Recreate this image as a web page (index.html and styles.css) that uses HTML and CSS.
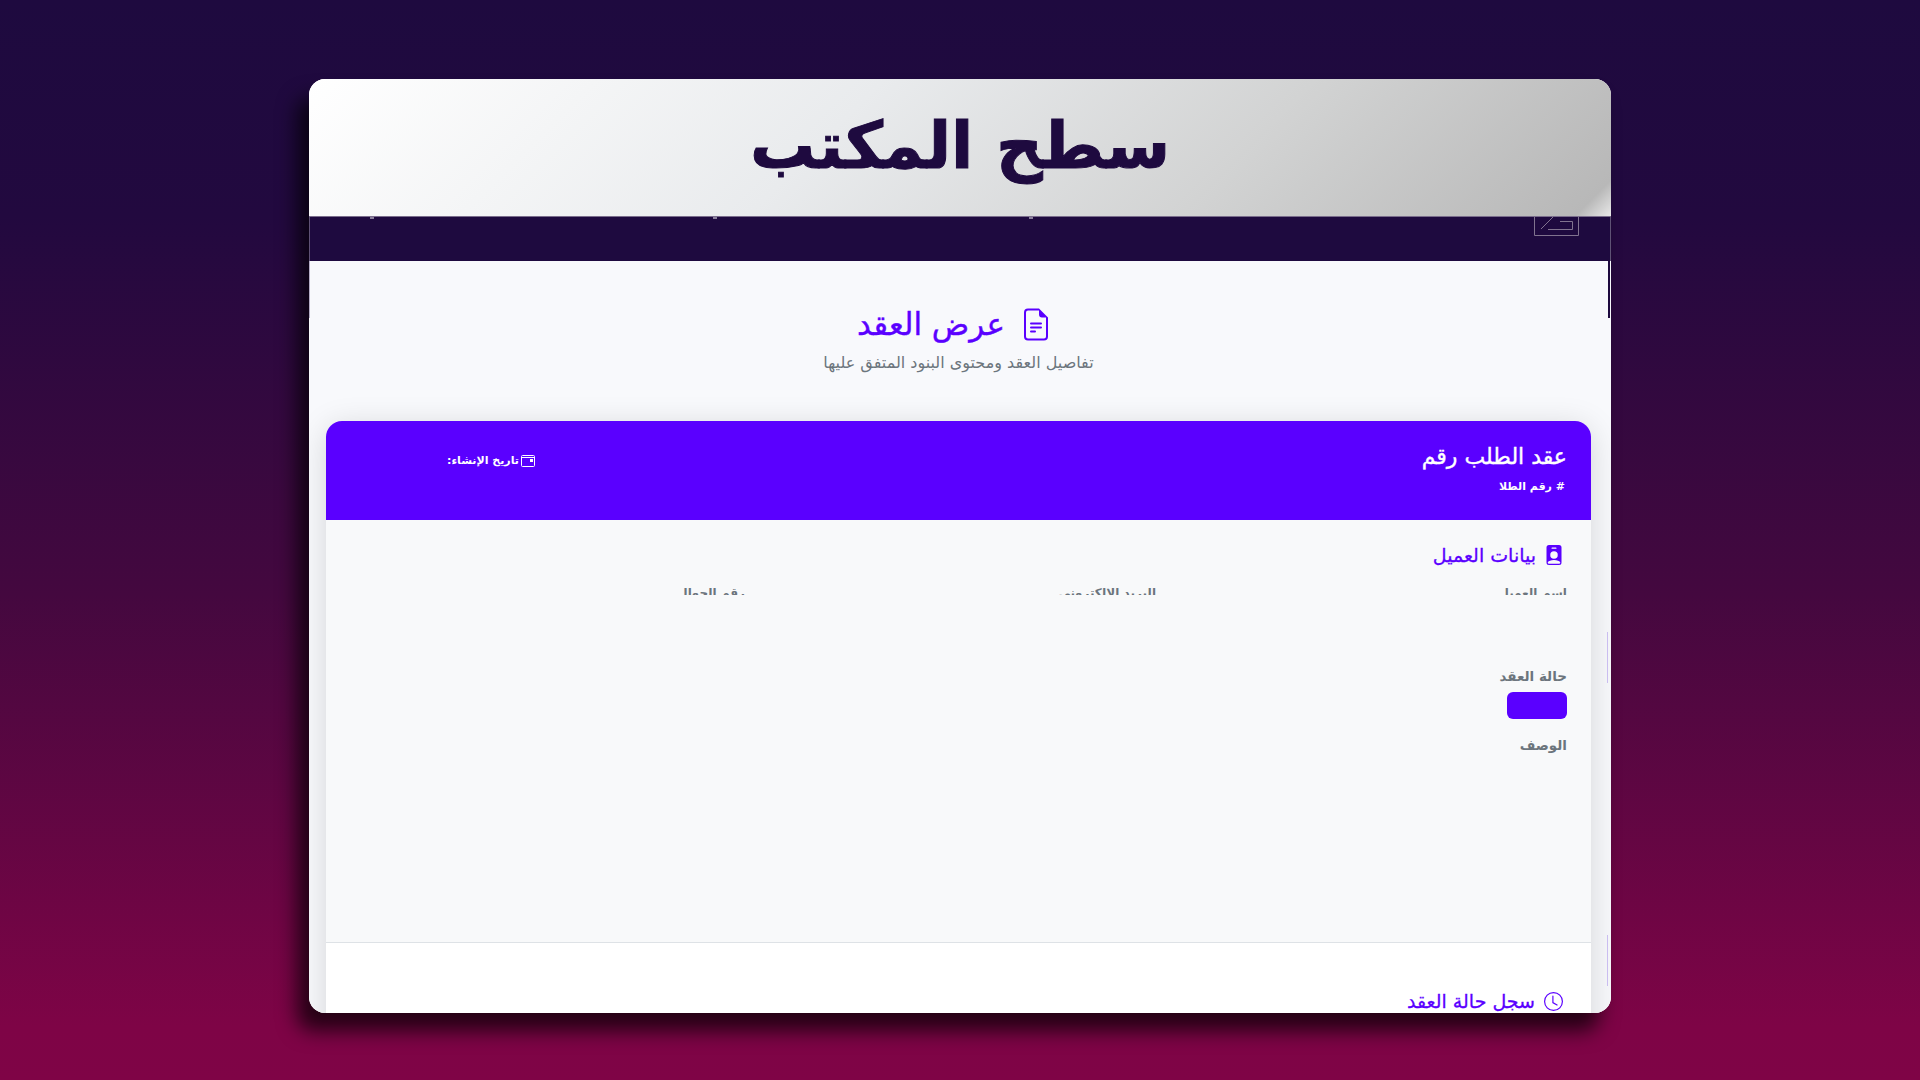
FILE: index.html
```html
<!DOCTYPE html>
<html lang="ar" dir="rtl">
<head>
<meta charset="utf-8">
<title>سطح المكتب</title>
<link rel="stylesheet" href="styles.css">
</head>
<body>
<div class="window">
  <header class="win-head"><h1>سطح المكتب</h1></header>
  <nav class="navbar">
    <svg class="nav-toggle" viewBox="0 0 45 19" width="45" height="19" aria-hidden="true">
      <path d="M.5 0V18.5H44.5V0" fill="none" stroke="#80738f"/>
      <path d="M7 12L19 0M14 12.5H38.5V4.5H26" fill="none" stroke="#80738f"/>
    </svg>
    <i class="tick tick-c"></i><i class="tick tick-b"></i><i class="tick tick-a"></i>
  </nav>
  <main class="content">
    <span class="edge edge-left"></span>
    <span class="edge edge-right"></span>
    <span class="scroll scroll-a"></span>
    <span class="scroll scroll-b"></span>
    <div class="page-head">
      <h2>
        <svg viewBox="0 0 16 16" width="32" height="33" fill="currentColor" aria-hidden="true"><path d="M5.5 7a.5.5 0 0 0 0 1h5a.5.5 0 0 0 0-1h-5zM5 9.5a.5.5 0 0 1 .5-.5h5a.5.5 0 0 1 0 1h-5a.5.5 0 0 1-.5-.5zm0 2a.5.5 0 0 1 .5-.5h2a.5.5 0 0 1 0 1h-2a.5.5 0 0 1-.5-.5z"/><path d="M9.5 0H4a2 2 0 0 0-2 2v12a2 2 0 0 0 2 2h8a2 2 0 0 0 2-2V4.5L9.5 0zm0 1v2A1.5 1.5 0 0 0 11 4.5h2V14a1 1 0 0 1-1 1H4a1 1 0 0 1-1-1V2a1 1 0 0 1 1-1h5.5z"/></svg>
        عرض العقد
      </h2>
      <p>تفاصيل العقد ومحتوى البنود المتفق عليها</p>
    </div>
    <section class="card">
      <div class="card-head">
        <div class="card-title">
          <h3>عقد الطلب رقم</h3>
          <p># رقم الطلا</p>
        </div>
        <div class="card-date">
          <svg viewBox="0 0 14 12" width="14" height="12" aria-hidden="true"><rect x=".5" y=".5" width="13" height="11" rx="1" fill="none" stroke="currentColor"/><path d="M.5 2.5H13.5" stroke="currentColor"/><rect x="9" y="4" width="3" height="3" fill="currentColor"/></svg>
          <span>تاريخ الإنشاء:</span>
        </div>
      </div>
      <div class="info">
        <h4>
          <svg viewBox="0 0 16 16" width="20" height="20" fill="currentColor" aria-hidden="true"><path d="M2 2a2 2 0 0 1 2-2h8a2 2 0 0 1 2 2v12a2 2 0 0 1-2 2H4a2 2 0 0 1-2-2V2zm4.5 0a.5.5 0 0 0 0 1h3a.5.5 0 0 0 0-1h-3zM8 11a3 3 0 1 0 0-6 3 3 0 0 0 0 6zm5 2.755C12.146 12.825 10.623 12 8 12s-4.146.826-5 1.755V14a1 1 0 0 0 1 1h8a1 1 0 0 0 1-1v-.245z"/></svg>
          بيانات العميل
        </h4>
        <div class="fields">
          <span class="label field">إسم العميل</span>
          <span class="label field">البريد الإلكتروني</span>
          <span class="label field">رقم الجوال</span>
        </div>
        <span class="label status-label">حالة العقد</span>
        <span class="badge"></span>
        <span class="label desc-label">الوصف</span>
      </div>
      <div class="history">
        <h4>
          <svg viewBox="0 0 16 16" width="19" height="19" fill="currentColor" aria-hidden="true"><path d="M8 3.5a.5.5 0 0 0-1 0V9a.5.5 0 0 0 .252.434l3.5 2a.5.5 0 0 0 .496-.868L8 8.71V3.5z"/><path d="M8 16A8 8 0 1 0 8 0a8 8 0 0 0 0 16zm7-8A7 7 0 1 1 1 8a7 7 0 0 1 14 0z"/></svg>
          سجل حالة العقد
        </h4>
      </div>
    </section>
  </main>
</div>
</body>
</html>
```

FILE: styles.css
```css
* { box-sizing: border-box; }
html, body { height: 100%; }
body {
  margin: 0;
  height: 1080px;
  overflow: hidden;
  padding: 79px 309px 0;
  background: linear-gradient(180deg, #1e0a3f 0%, #22093f 20%, #44083f 55%, #7e0446 95%, #7f0446 100%);
  font-family: "DejaVu Sans", "Noto Sans", sans-serif;
}
.window {
  width: 1302px;
  height: 934px;
  border-radius: 16px;
  overflow: clip;
  background: #fff;
  display: flex;
  flex-direction: column;
  box-shadow: -12px 18px 20px rgba(0, 0, 0, .7);
}
.win-head {
  height: 138px;
  flex: none;
  border-bottom: 1px solid #7a6d8c;
  background: linear-gradient(135deg, #ffffff 0%, #e9ebed 40%, #d2d3d3 70%, #b8b8b8 97.5%, #e8e8e8 100%);
  display: flex;
  justify-content: center;
}
.win-head h1 {
  margin: 28px 0 0;
  font-size: 65px;
  line-height: 78px;
  font-weight: 700;
  color: #1e0a3f;
  -webkit-text-stroke: 1px #1e0a3f;
}
.navbar {
  height: 44px;
  flex: none;
  background: #1e0a3f;
  border-inline: 1px solid #5f5275;
  display: flex;
  align-items: flex-start;
  padding-right: 31px;
}
.nav-toggle { display: block; }
.tick { width: 4px; height: 2px; background: #8a7f9c; display: block; }
.tick-c { margin-right: 501px; }
.tick-b { margin-right: 312px; }
.tick-a { margin-right: 339px; }
.content {
  position: relative;
  flex: 1;
  min-height: 0;
  background: #f8f9fc;
  padding: 0 20px 0 17px;
}
.edge { position: absolute; top: 0; width: 1px; height: 57px; }
.edge-left { left: 0; background: #b5adc6; }
.edge-right { right: 1px; width: 2px; background: #1e0a3f; }
.scroll { position: absolute; right: 3px; width: 1px; height: 51px; background: #cabdf0; }
.scroll-a { top: 371px; }
.scroll-b { top: 674px; }
.page-head { height: 160px; padding-top: 41px; text-align: center; }
.page-head h2 {
  margin: 0 8px 0 0;
  height: 44px;
  display: flex;
  justify-content: center;
  align-items: center;
  gap: 15px;
  font-size: 31px;
  font-weight: 400;
  color: #5a00ff;
  -webkit-text-stroke: .4px #5a00ff;
}
.page-head p { margin: 5px 0 0; font-size: 16px; line-height: 24px; color: #6c757d; }
.card {
  background: #fff;
  height: 900px;
  border-radius: 16px 16px 0 0;
  box-shadow: 0 6px 32px rgba(0, 0, 0, .15);
}
.card-head {
  height: 99px;
  background: #5a00ff;
  color: #fff;
  border-radius: 16px 16px 0 0;
  display: flex;
  justify-content: space-between;
  align-items: flex-start;
  padding: 20px 24px 0 121px;
}
.card-title h3 { margin: 0; font-size: 22px; line-height: 32px; font-weight: 400; -webkit-text-stroke: .4px #fff; }
.card-title p { margin: 4px 2px 0 0; font-size: 11px; line-height: 20px; font-weight: 700; }
.card-date { display: flex; align-items: center; gap: 2px; font-size: 11px; line-height: 20px; font-weight: 700; margin-top: 10px; }
.info {
  height: 423px;
  background: #f8f9fa;
  border-bottom: 1px solid #dee2e6;
  padding: 20px 24px 0;
}
h4 {
  margin: 0;
  display: flex;
  align-items: center;
  gap: 8px;
  font-size: 19px;
  line-height: 30px;
  font-weight: 400;
  color: #5a00ff;
  -webkit-text-stroke: .3px #5a00ff;
}
.info h4 { margin-right: 3px; }
.fields {
  display: grid;
  grid-template-columns: repeat(3, 411px);
  height: 13px;
  margin-top: 12px;
  overflow: hidden;
}
.label { display: block; font-size: 13.5px; line-height: 22px; font-weight: 700; color: #6c757d; }
.field { font-size: 12px; }
.status-label { margin-top: 70px; }
.badge { display: block; width: 60px; height: 27px; margin-top: 5px; border-radius: 6px; background: #5a00ff; }
.desc-label { margin-top: 15px; }
.history { padding: 43px 24px 0; }
.history h4 { margin-right: 4px; gap: 9px; }
```
